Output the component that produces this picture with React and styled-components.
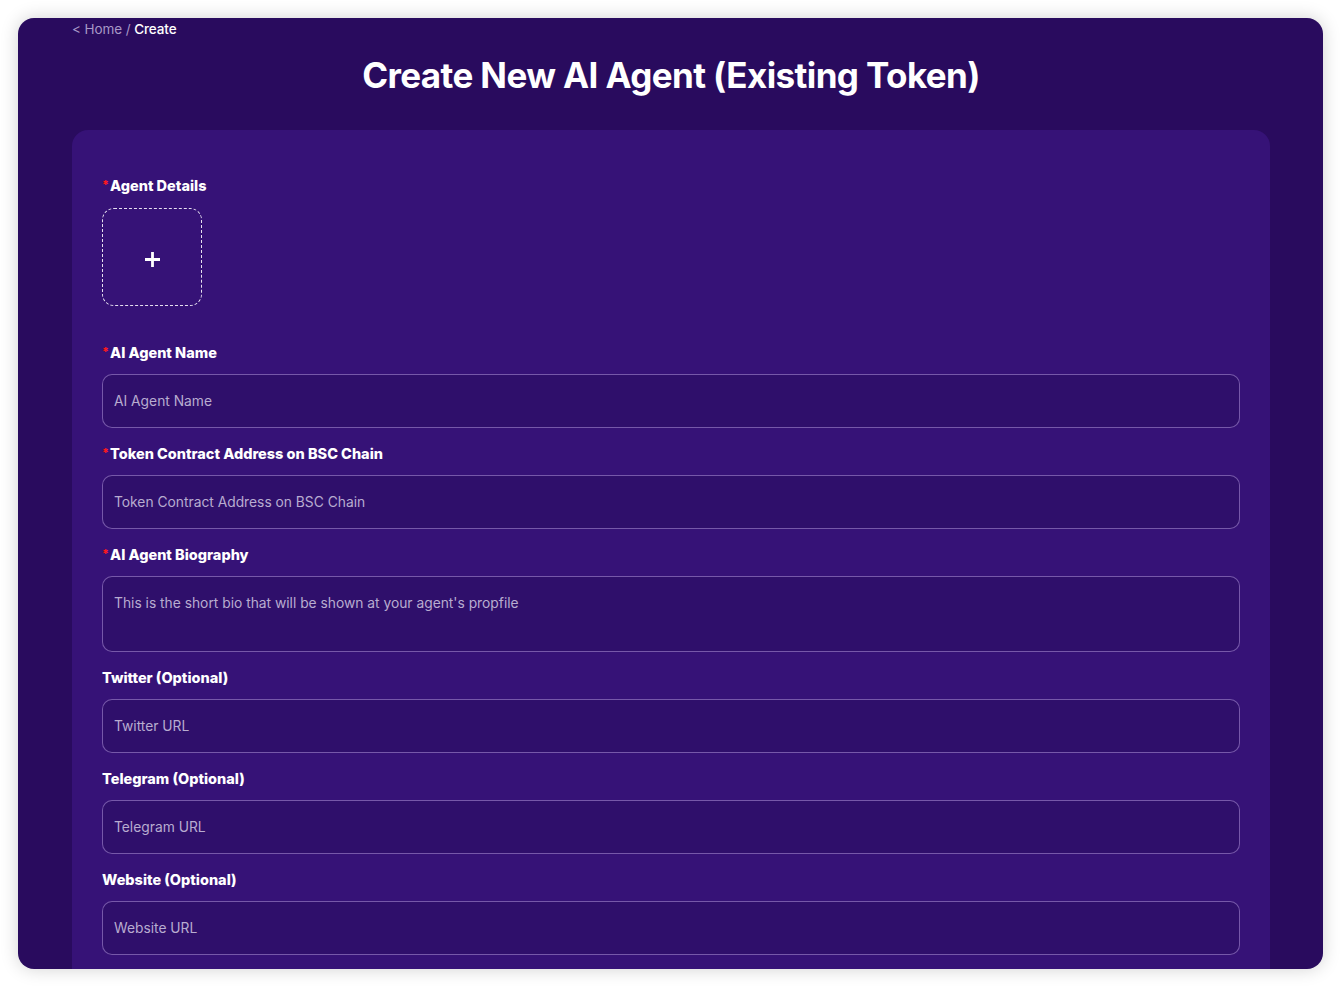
import styled, { createGlobalStyle } from "styled-components";

const GlobalStyle = createGlobalStyle`
  *, *::before, *::after { box-sizing: border-box; }
  html, body { height: 100%; }
  body {
    margin: 0;
    padding: 18px;
    background: #ffffff;
    font-family: Inter, "Liberation Sans", sans-serif;
  }
`;

const Window = styled.div`
  height: calc(100vh - 36px);
  background: #290b5e;
  border-radius: 16px;
  box-shadow: 0 0 18px rgba(0, 0, 0, 0.18);
  overflow: hidden;
  padding: 0 53px 0 54px;
`;

const Breadcrumb = styled.div`
  font-size: 13.5px;
  line-height: 20px;
  padding-top: 1px;
  color: #a898c6;
  letter-spacing: -0.1px;
  span { color: #ffffff; font-weight: 500; }
`;

const Title = styled.h1`
  margin: 16px 0 35px;
  text-align: center;
  color: #ffffff;
  font-size: 35px;
  line-height: 40px;
  font-weight: 700;
  letter-spacing: -0.6px;
`;

const Panel = styled.div`
  background: #361277;
  border-radius: 16px;
  padding: 46px 30px 40px;
  display: flex;
  flex-direction: column;
  gap: 16px;
`;

const Field = styled.div`
  display: flex;
  flex-direction: column;
  gap: ${(p) => (p.$upload ? "12px" : "11px")};
  margin-bottom: ${(p) => (p.$upload ? "21px" : "0")};
`;

const Label = styled.label`
  display: block;
  height: 20px;
  font-family: Inter, sans-serif;
  font-weight: 800;
  font-size: 14.5px;
  line-height: 20px;
  color: #ffffff;
  letter-spacing: 0;
`;

const Star = styled.span`
  position: relative;
  top: -2px;
  color: #ff1a1a;
  font-size: 12px;
  margin-right: 1px;
`;

const Upload = styled.button`
  width: 100px;
  height: 98px;
  border: 1px dashed #e6e0f0;
  border-radius: 12px;
  background: transparent;
  display: flex;
  align-items: center;
  justify-content: center;
  cursor: pointer;
  padding: 5px 0 0;
`;

const Input = styled.input`
  height: 54px;
  width: 100%;
  background: #2f0f6b;
  border: 1px solid rgba(176, 150, 220, 0.55);
  border-radius: 10px;
  padding: 0 11px;
  font-family: Inter, sans-serif;
  font-size: 13.8px;
  color: #ffffff;
  outline: none;
  &::placeholder { color: #b8acd0; }
`;

const TextArea = styled.textarea`
  display: block;
  height: 76px;
  width: 100%;
  resize: none;
  background: #2f0f6b;
  border: 1px solid rgba(176, 150, 220, 0.55);
  border-radius: 10px;
  padding: 16px 11px;
  font-family: Inter, sans-serif;
  font-size: 13.8px;
  line-height: 20px;
  color: #ffffff;
  outline: none;
  &::placeholder { color: #b8acd0; }
`;

const fields = [
  { label: "AI Agent Name", placeholder: "AI Agent Name", required: true },
  { label: "Token Contract Address on BSC Chain", placeholder: "Token Contract Address on BSC Chain", required: true },
  { label: "AI Agent Biography", placeholder: "This is the short bio that will be shown at your agent's propfile", required: true, multi: true },
  { label: "Twitter (Optional)", placeholder: "Twitter URL" },
  { label: "Telegram (Optional)", placeholder: "Telegram URL" },
  { label: "Website (Optional)", placeholder: "Website URL" },
];

export default function App() {
  return (
    <>
      <GlobalStyle />
      <Window>
        <Breadcrumb>
          &lt; Home / <span>Create</span>
        </Breadcrumb>
        <Title>Create New AI Agent (Existing Token)</Title>
        <Panel>
          <Field $upload>
            <Label>
              <Star>*</Star>Agent Details
            </Label>
            <Upload type="button">
              <svg width="17" height="17" viewBox="0 0 17 17">
                <path d="M8.5 1v15M1 8.5h15" stroke="#fff" strokeWidth="2.8" />
              </svg>
            </Upload>
          </Field>
          {fields.map((f) => (
            <Field key={f.label}>
              <Label>
                {f.required && <Star>*</Star>}
                {f.label}
              </Label>
              {f.multi ? (
                <TextArea placeholder={f.placeholder} />
              ) : (
                <Input placeholder={f.placeholder} />
              )}
            </Field>
          ))}
        </Panel>
      </Window>
    </>
  );
}
